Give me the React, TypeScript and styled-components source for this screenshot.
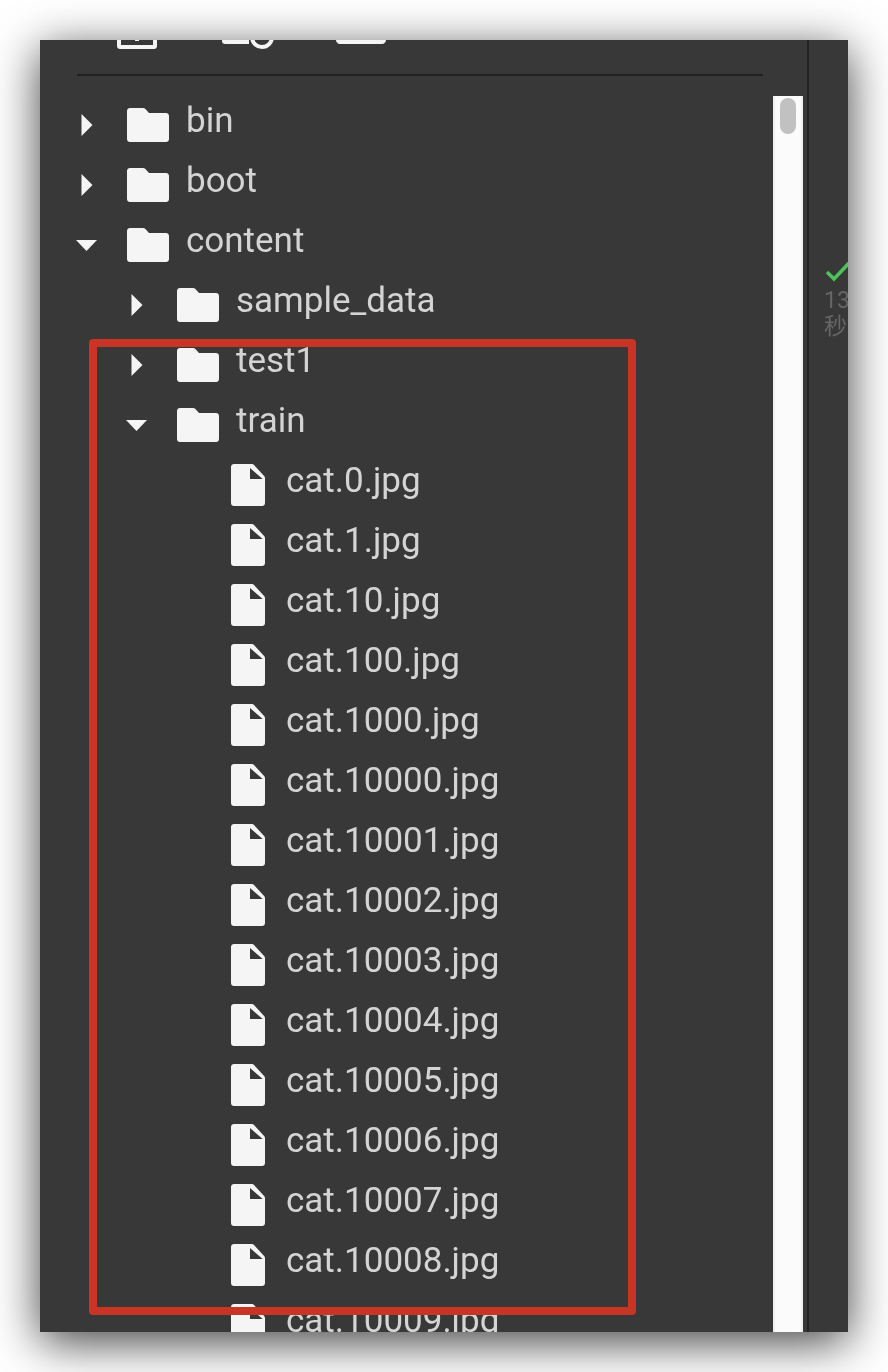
import { FC } from "react";
import styled, { createGlobalStyle } from "styled-components";

const GlobalStyle = createGlobalStyle`
  html, body {
    margin: 0;
    padding: 0;
    background: #ffffff;
  }
  body {
    font-family: Roboto, "Noto Sans CJK SC", sans-serif;
  }
`;

const Page = styled.div`
  width: 888px;
  height: 1372px;
  padding: 40px;
  box-sizing: border-box;
  overflow: hidden;
`;

const Window = styled.div`
  position: relative;
  width: 808px;
  height: 1292px;
  display: flex;
  background: #383838;
  box-shadow: 0 10px 44px rgba(0, 0, 0, 0.75);
  overflow: hidden;
`;

const Panel = styled.div`
  width: 767px;
  flex: none;
  display: flex;
  flex-direction: column;
`;

const Divider = styled.div`
  width: 2px;
  flex: none;
  background: #222222;
`;

const Toolbar = styled.div`
  height: 34px;
  margin: 0 44px 0 37px;
  border-bottom: 2px solid #222222;
  flex: none;
  display: flex;
  align-items: flex-start;
  padding-left: 40px;
  gap: 62px;
`;

const ToolIcon = styled.svg`
  display: block;
  margin-top: -31px;
  flex: none;
  fill: #f5f5f5;
`;

const Body = styled.div`
  flex: 1;
  min-height: 0;
  display: flex;
`;

const Tree = styled.div`
  flex: 1;
  min-width: 0;
  padding-top: 19px;
  overflow: hidden;
`;

const Row = styled.div<{ $level: number; $file?: boolean }>`
  height: 60px;
  display: flex;
  align-items: center;
  padding-left: ${({ $level, $file }) => ($file ? 191 : 36 + $level * 50)}px;
`;

const Arrow = styled.svg`
  width: 22px;
  height: 22px;
  flex: none;
  margin-right: 29px;
  fill: #f5f5f5;
`;

const FolderIcon = styled.svg`
  width: 42px;
  height: 34px;
  flex: none;
  fill: #f5f5f5;
  margin-right: 17px;
`;

const FileIcon = styled.svg`
  width: 34px;
  height: 42px;
  flex: none;
  margin-right: 21px;
`;

const Label = styled.span`
  position: relative;
  top: -4px;
  font-size: 35px;
  line-height: 40px;
  color: #d4d4d4;
  white-space: nowrap;
  will-change: transform;
`;

const ScrollTrack = styled.div`
  width: 30px;
  margin: 20px 4px 0 0;
  flex: none;
  background: #fbfbfb;
  border-left: 2px solid #f0f0f0;
  border-right: 2px solid #f0f0f0;
  box-sizing: border-box;
  padding: 2px 4px 0;
`;

const ScrollThumb = styled.div`
  width: 16px;
  height: 36px;
  margin: 0 auto;
  border-radius: 8px;
  background: #c1c1c1;
`;

const Gutter = styled.div`
  flex: 1;
  min-width: 0;
  padding: 221px 0 0 16px;
  overflow: hidden;
`;

const Check = styled.svg`
  display: block;
  width: 28px;
  height: 22px;
  fill: none;
  stroke: #4cc35a;
  stroke-width: 3.5;
`;

const Duration = styled.div`
  width: 40px;
  margin: 5px 0 0 -1px;
  font-size: 23px;
  line-height: 26px;
  color: #666666;
  will-change: transform;
`;

const Highlight = styled.div`
  position: absolute;
  left: 49px;
  top: 299px;
  width: 547px;
  height: 976px;
  box-sizing: border-box;
  border: 8px solid #c83524;
  border-radius: 4px;
  pointer-events: none;
`;

const ArrowIcon: FC<{ open: boolean }> = ({ open }) => (
  <Arrow viewBox="0 0 22 22">
    {open ? <path d="M0 6h21L10.5 17z" /> : <path d="M5.500 0l11 11-11 11z" />}
  </Arrow>
);

const Folder: FC = () => (
  <FolderIcon viewBox="0 0 42 34">
    <path d="M3 0h13c1 0 1.800.4 2.400 1L22 5h17c1.700 0 3 1.300 3 3v23c0 1.700-1.300 3-3 3H3c-1.700 0-3-1.300-3-3V3c0-1.700 1.300-3 3-3z" />
  </FolderIcon>
);

const File: FC = () => (
  <FileIcon viewBox="0 0 34 42">
    <path
      fill="#f5f5f5"
      d="M3 0h18c.8 0 1.500.3 2 .9L33.100 12c.6.600.9 1.300.9 2v25c0 1.700-1.300 3-3 3H3c-1.700 0-3-1.300-3-3V3c0-1.700 1.300-3 3-3z"
    />
    <path fill="#383838" d="M19 4v11h12.700z" />
  </FileIcon>
);

type Node = { name: string; level: number; open?: boolean; file?: boolean };

const fileNames = [
  "0",
  "1",
  "10",
  "100",
  "1000",
  "10000",
  "10001",
  "10002",
  "10003",
  "10004",
  "10005",
  "10006",
  "10007",
  "10008",
  "10009",
];

const nodes: Node[] = [
  { name: "bin", level: 0, open: false },
  { name: "boot", level: 0, open: false },
  { name: "content", level: 0, open: true },
  { name: "sample_data", level: 1, open: false },
  { name: "test1", level: 1, open: false },
  { name: "train", level: 1, open: true },
  ...fileNames.map((n) => ({ name: `cat.${n}.jpg`, level: 2, file: true })),
];

const App: FC = () => {
  return (
    <Page>
      <GlobalStyle />
      <Window>
        <Panel>
          <Toolbar>
            <ToolIcon width="43" height="40" viewBox="0 0 43 40">
              <path d="M3 0h34c1.700 0 3 1.300 3 3v34c0 1.700-1.300 3-3 3H3c-1.700 0-3-1.300-3-3V3c0-1.700 1.300-3 3-3zm1 4v32h32V4z" />
              <rect x="18" y="30" width="4" height="2" />
            </ToolIcon>
            <ToolIcon width="52" height="40" viewBox="0 0 52 40">
              <path d="M0 28h27v7H3c-1.700 0-3-1.300-3-3z" />
              <circle cx="40" cy="28" r="10" fill="none" stroke="#f5f5f5" strokeWidth="4" />
            </ToolIcon>
            <ToolIcon width="50" height="40" viewBox="0 0 50 40">
              <path d="M0 28h50v3c0 2.200-1.800 4-4 4H4c-2.200 0-4-1.800-4-4z" />
            </ToolIcon>
          </Toolbar>
          <Body>
            <Tree>
              {nodes.map((node) => (
                <Row key={node.name} $level={node.level} $file={node.file}>
                  {node.file ? (
                    <File />
                  ) : (
                    <>
                      <ArrowIcon open={!!node.open} />
                      <Folder />
                    </>
                  )}
                  <Label>{node.name}</Label>
                </Row>
              ))}
            </Tree>
            <ScrollTrack>
              <ScrollThumb />
            </ScrollTrack>
          </Body>
        </Panel>
        <Divider />
        <Gutter>
          <Check viewBox="0 0 28 22">
            <path d="M2 11l7 7L24 2" />
          </Check>
          <Duration>
            13
            <br />秒
          </Duration>
        </Gutter>
        <Highlight />
      </Window>
    </Page>
  );
};

export default App;
